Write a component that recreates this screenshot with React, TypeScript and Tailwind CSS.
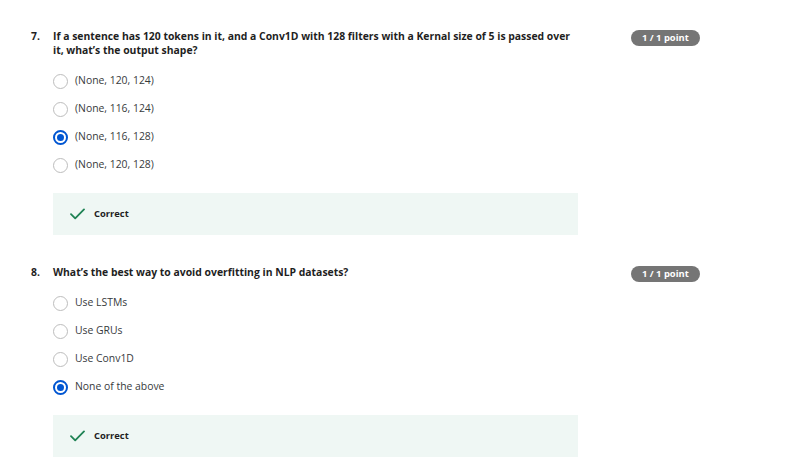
import React from "react";

type Question = {
  num: string;
  text: string;
  options: string[];
  selected: number;
};

const questions: Question[] = [
  {
    num: "7.",
    text: "If a sentence has 120 tokens in it, and a Conv1D with 128 filters with a Kernal size of 5 is passed over it, what’s the output shape?",
    options: ["(None, 120, 124)", "(None, 116, 124)", "(None, 116, 128)", "(None, 120, 128)"],
    selected: 2,
  },
  {
    num: "8.",
    text: "What’s the best way to avoid overfitting in NLP datasets?",
    options: ["Use LSTMs", "Use GRUs", "Use Conv1D", "None of the above"],
    selected: 3,
  },
];

const Radio = ({ checked }: { checked: boolean }) =>
  checked ? (
    <span className="w-[15px] h-[15px] rounded-full border-2 border-[#0056d2] flex items-center justify-center shrink-0">
      <span className="w-[7px] h-[7px] rounded-full bg-[#0056d2] block" />
    </span>
  ) : (
    <span className="w-[15px] h-[15px] rounded-full border border-[#bdbdbd] bg-white block shrink-0" />
  );

const Check = () => (
  <svg width="15" height="12" viewBox="0 0 15 12" fill="none" className="shrink-0">
    <path d="M1 6.2 L5.2 10.4 L14 1.4" stroke="#1f8354" strokeWidth="1.8" strokeLinecap="round" strokeLinejoin="round" />
  </svg>
);

const QuestionBlock = ({ q }: { q: Question }) => (
  <div className="flex items-start">
    <div className="w-[22px] shrink-0 text-[10.4px] leading-[14px] font-bold text-[#1f1f1f]">{q.num}</div>
    <div className="w-[525px] shrink-0">
      <p className="text-[10.4px] leading-[14px] font-bold text-[#1f1f1f]">{q.text}</p>
      <div className="mt-[10px] flex flex-col">
        {q.options.map((o, i) => (
          <div key={o} className="h-[28px] flex items-center gap-[7px]">
            <Radio checked={i === q.selected} />
            <span className="text-[10.4px] text-[#373a3c]">{o}</span>
          </div>
        ))}
      </div>
      <div className="mt-[14px] h-[42px] bg-[#eff7f4] flex items-center pl-[17px] gap-[9px]">
        <Check />
        <span className="text-[9.4px] font-bold text-[#1f1f1f]">Correct</span>
      </div>
    </div>
    <div className="ml-[53px] mt-[1px] h-[16px] px-[11px] rounded-full bg-[#757575] text-white text-[9.4px] font-bold flex items-center whitespace-nowrap">
      1 / 1 point
    </div>
  </div>
);

export default function App() {
  return (
    <div
      className="w-[790px] h-[461px] bg-white overflow-hidden pl-[31px] pt-[29px] flex flex-col gap-[30px]"
      style={{ fontFamily: '"Open Sans", "Liberation Sans", sans-serif' }}
    >
      {questions.map((q) => (
        <QuestionBlock key={q.num} q={q} />
      ))}
    </div>
  );
}
